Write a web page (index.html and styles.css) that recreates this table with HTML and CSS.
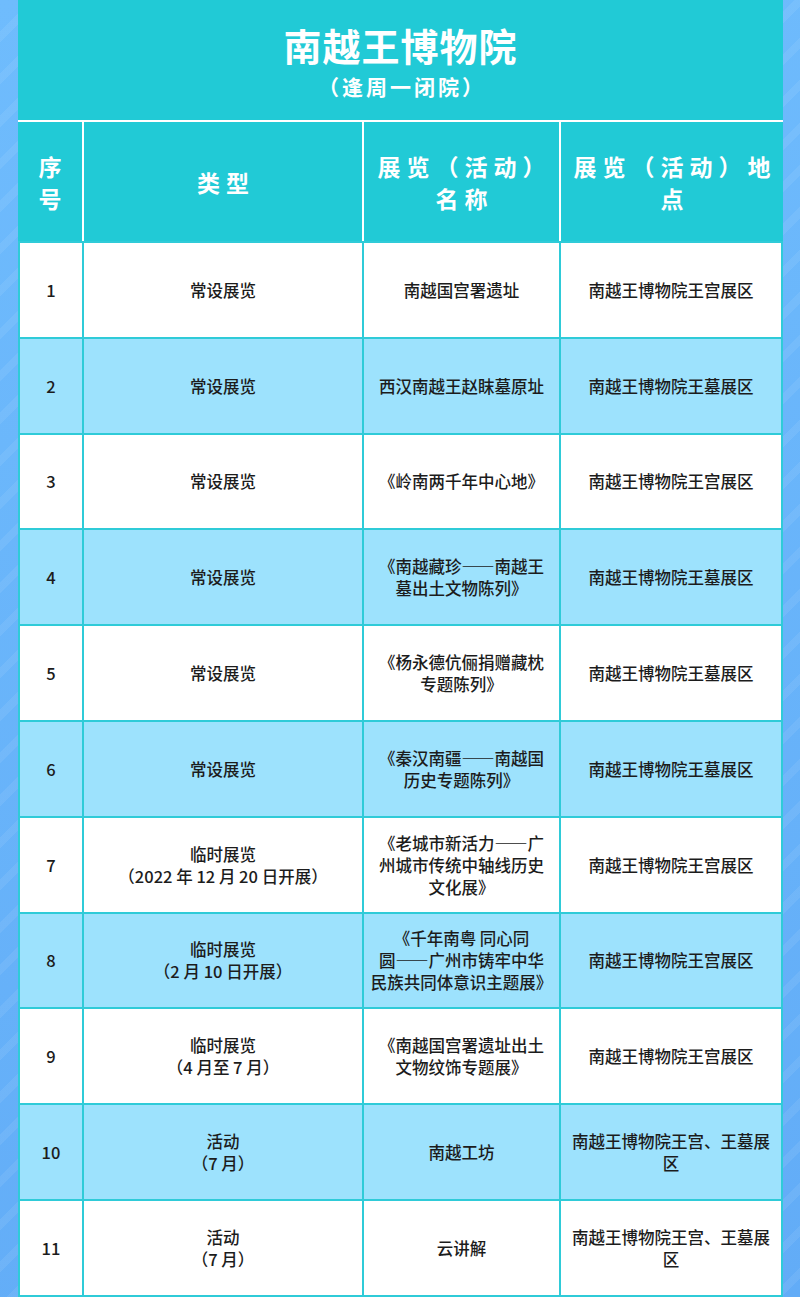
FILE: index.html
```html
<!DOCTYPE html>
<html lang="zh-CN">
<head>
<meta charset="utf-8">
<title>南越王博物院</title>
<link rel="stylesheet" href="styles.css">
</head>
<body>
<div class="card">
  <div class="title">
    <div class="title-main">南越王博物院</div>
    <div class="title-sub">（逢周一闭院）</div>
  </div>
  <div class="thead">
    <div class="th">序号</div>
    <div class="th">类型</div>
    <div class="th">展览（活动）名称</div>
    <div class="th">展览（活动）地点</div>
  </div>
  <div class="tbody">
    <div class="row">
      <div class="td">1</div>
      <div class="td">常设展览</div>
      <div class="td">南越国宫署遗址</div>
      <div class="td">南越王博物院王宫展区</div>
    </div>
    <div class="row alt">
      <div class="td">2</div>
      <div class="td">常设展览</div>
      <div class="td">西汉南越王赵眜墓原址</div>
      <div class="td">南越王博物院王墓展区</div>
    </div>
    <div class="row">
      <div class="td">3</div>
      <div class="td">常设展览</div>
      <div class="td">《岭南两千年中心地》</div>
      <div class="td">南越王博物院王宫展区</div>
    </div>
    <div class="row alt">
      <div class="td">4</div>
      <div class="td">常设展览</div>
      <div class="td">《南越藏珍——南越王<br>墓出土文物陈列》</div>
      <div class="td">南越王博物院王墓展区</div>
    </div>
    <div class="row">
      <div class="td">5</div>
      <div class="td">常设展览</div>
      <div class="td">《杨永德伉俪捐赠藏枕<br>专题陈列》</div>
      <div class="td">南越王博物院王墓展区</div>
    </div>
    <div class="row alt">
      <div class="td">6</div>
      <div class="td">常设展览</div>
      <div class="td">《秦汉南疆——南越国<br>历史专题陈列》</div>
      <div class="td">南越王博物院王墓展区</div>
    </div>
    <div class="row">
      <div class="td">7</div>
      <div class="td">临时展览<br>（2022 年 12 月 20 日开展）</div>
      <div class="td">《老城市新活力——广<br>州城市传统中轴线历史<br>文化展》</div>
      <div class="td">南越王博物院王宫展区</div>
    </div>
    <div class="row alt">
      <div class="td">8</div>
      <div class="td">临时展览<br>（2 月 10 日开展）</div>
      <div class="td">《千年南粤 同心同<br>圆——广州市铸牢中华<br>民族共同体意识主题展》</div>
      <div class="td">南越王博物院王宫展区</div>
    </div>
    <div class="row">
      <div class="td">9</div>
      <div class="td">临时展览<br>（4 月至 7 月）</div>
      <div class="td">《南越国宫署遗址出土<br>文物纹饰专题展》</div>
      <div class="td">南越王博物院王宫展区</div>
    </div>
    <div class="row alt">
      <div class="td">10</div>
      <div class="td">活动<br>（7 月）</div>
      <div class="td">南越工坊</div>
      <div class="td">南越王博物院王宫、王墓展<br>区</div>
    </div>
    <div class="row">
      <div class="td">11</div>
      <div class="td">活动<br>（7 月）</div>
      <div class="td">云讲解</div>
      <div class="td">南越王博物院王宫、王墓展<br>区</div>
    </div>
  </div>
</div>
</body>
</html>
```
FILE: styles.css
```css
html, body {
  margin: 0;
  padding: 0;
}
body {
  height: 1297px;
  overflow: hidden;
  background-color: #66b2f9;
  background-image:
    repeating-linear-gradient(135deg, rgba(255,255,255,0) 0px, rgba(255,255,255,0) 22px, rgba(255,255,255,0.07) 22px, rgba(255,255,255,0.07) 30px),
    linear-gradient(170deg, #6fbcfd 0%, #62acf7 100%);
  font-family: "Noto Sans CJK SC", "Liberation Sans", sans-serif;
}
.card {
  width: 765px;
  margin-left: 18px;
  background: #21cad6;
}
.title {
  height: 122px;
  box-sizing: border-box;
  padding-top: 22px;
  border-bottom: 2px solid #ffffff;
  color: #ffffff;
  text-align: center;
  font-weight: 700;
}
.title-main {
  font-size: 38px;
  line-height: 46px;
  letter-spacing: 1px;
}
.title-sub {
  font-size: 21px;
  line-height: 28px;
  margin-top: 4px;
  letter-spacing: 3px;
  padding-left: 3px;
}
.thead {
  display: grid;
  grid-template-columns: 64px 278px 195px 222px;
  column-gap: 2px;
  background: #ffffff;
  height: 119px;
}
.th {
  background: #21cad6;
  color: #ffffff;
  font-weight: 700;
  font-size: 23px;
  line-height: 32px;
  letter-spacing: 6px;
  padding: 0 4px 0 10px;
  display: flex;
  align-items: center;
  justify-content: center;
  text-align: center;
}
.tbody {
  display: grid;
  background: #2fcbd8;
  padding: 2px;
  row-gap: 2px;
}
.row {
  display: grid;
  grid-template-columns: 62px 278px 195px 220px;
  column-gap: 2px;
  height: 93.8px;
}
.td {
  background: #ffffff;
  color: #1c1c1c;
  font-size: 16.5px;
  font-weight: 500;
  line-height: 22px;
  display: flex;
  align-items: center;
  justify-content: center;
  text-align: center;
}
.row.alt .td {
  background: #9de2fd;
}
```
